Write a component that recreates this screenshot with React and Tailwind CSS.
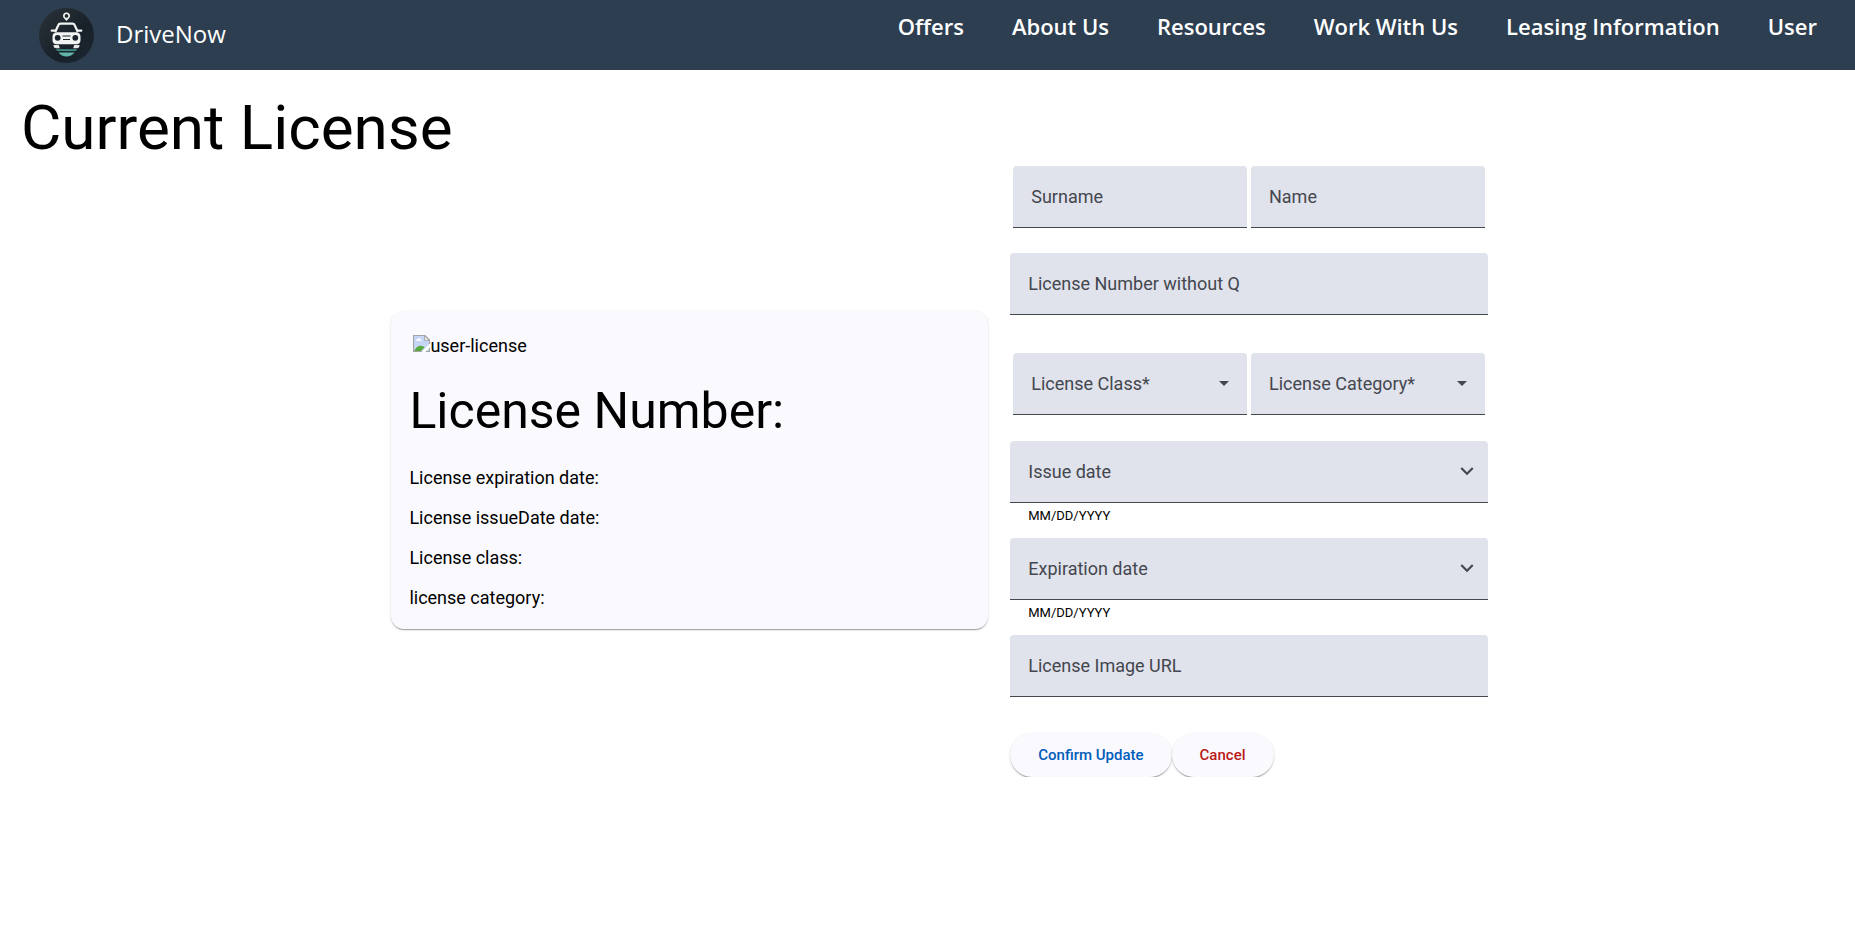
import React from "react";

const NAV_LINKS = ["Offers", "About Us", "Resources", "Work With Us", "Leasing Information", "User"];

const DETAILS = [
  "License expiration date:",
  "License issueDate date:",
  "License class:",
  "license category:",
];

function Logo() {
  return (
    <svg viewBox="0 0 55 55" className="size-[55px]" aria-hidden="true">
      <defs>
        <linearGradient id="disc" x1="0" y1="0" x2="1" y2="1">
          <stop offset="0" stopColor="#2b3238" />
          <stop offset="0.6" stopColor="#18212a" />
          <stop offset="1" stopColor="#1d2731" />
        </linearGradient>
      </defs>
      <circle cx="27.5" cy="27.5" r="27.5" fill="url(#disc)" />
      <path
        fillRule="evenodd"
        fill="#f1f3f2"
        d="M27.500 4.400a3.500 3.500 0 0 0-3.500 3.500c0 2.200 2.200 3 3.500 5.200 1.300-2.200 3.500-3 3.500-5.200a3.500 3.500 0 0 0-3.500-3.500zm0 1.700a1.800 1.800 0 1 1 0 3.700 1.800 1.800 0 0 1 0-3.700z"
      />
      <path d="M16.200 24l3-6.600q.7-1.700 2.400-1.700h11.800q1.700 0 2.400 1.700l3 6.600" fill="none" stroke="#f1f3f2" strokeWidth="2.300" />
      <path d="M12.800 22.600h3.400M38.800 22.600h3.400" stroke="#f1f3f2" strokeWidth="2.400" strokeLinecap="round" />
      <path
        fill="#f1f3f2"
        d="M18 24.200h19q4.500 0 4.500 4.500v3.300q0 4.200-4.200 4.200H17.700q-4.200 0-4.200-4.200v-3.300q0-4.500 4.500-4.500z"
      />
      <circle cx="18.700" cy="29.800" r="2.900" fill="#1b242d" />
      <circle cx="36.300" cy="29.800" r="2.900" fill="#1b242d" />
      <path d="M23.500 28h8M24 31.500h7" stroke="#1b242d" strokeWidth="1.100" />
      <path fill="#e6e9e8" d="M14.500 37h5.200l1.100 3.300h-3.600q-2.700 0-2.700-3.300zM40.500 37h-5.200l-1.100 3.300h3.600q2.700 0 2.700-3.300z" />
      <path fill="#3f8f86" d="M17 41.200h21l-1.200 1.900H18.200z" />
      <path fill="#5fb5a6" d="M19.500 44.500h16q-3 4-8 4t-8-4z" />
    </svg>
  );
}

function BrokenImageIcon() {
  return (
    <svg viewBox="0 0 16 16" className="size-[17px]" aria-hidden="true">
      <path d="M.5.5h10.500l4.500 4.500v10.500H.5z" fill="#c6d6f6" stroke="#a3a3a3" />
      <path d="M11 .5v4.500h4.500z" fill="#fff" stroke="#a3a3a3" />
      <path d="M2.500 5.500q0-1.500 1.700-1.500.6-1.300 2-1 1.300.2 1.300 1.500 1 .2.800 1z" fill="#fff" />
      <path d="M1 15q2.500-5 6.500-5 2 0 3.500 1.500L7.500 15z" fill="#57ab3c" />
      <path d="M8 16l8-8v3.500L11.500 16z" fill="#fff" />
    </svg>
  );
}

function Field({ id, label, children }) {
  return (
    <div className="relative flex h-[62px] min-w-0 flex-1 items-center rounded-t border-b border-[#44474e] bg-[#e0e2ec] text-[#44474e]">
      {children}
      <label htmlFor={id} className="pointer-events-none relative px-[18px]">
        {label}
      </label>
    </div>
  );
}

const CONTROL = "absolute inset-0 w-full appearance-none rounded-t bg-transparent px-[18px] outline-none";

function TextField({ id, label }) {
  return (
    <Field id={id} label={label}>
      <input id={id} type="text" className={CONTROL} />
    </Field>
  );
}

function SelectField({ id, label, options }) {
  return (
    <Field id={id} label={label}>
      <select id={id} required defaultValue="" className={CONTROL}>
        <option value=""></option>
        {options.map((option) => (
          <option key={option}>{option}</option>
        ))}
      </select>
      <svg viewBox="0 0 10 5" className="pointer-events-none absolute right-[18px] h-[5px] w-[10px]" aria-hidden="true">
        <path d="M0 0h10L5 5z" fill="#44474e" />
      </svg>
    </Field>
  );
}

function DateField({ id, label }) {
  return (
    <div className="h-[97px]">
      <Field id={id} label={label}>
        <input id={id} type="text" aria-describedby={id + "-hint"} className={CONTROL} />
        <button type="button" aria-label={"Open calendar for " + label} className="absolute right-2 flex size-[26px] items-center justify-center">
          <svg viewBox="0 0 24 24" className="size-[26px]" aria-hidden="true">
            <path d="M7.410 7.590L12 12.170l4.590-4.580L18 9l-6 6-6-6z" fill="#44474e" />
          </svg>
        </button>
      </Field>
      <p id={id + "-hint"} className="px-[18px] pt-1 text-[13px] leading-[18px] text-black">
        MM/DD/YYYY
      </p>
    </div>
  );
}

const BUTTON =
  "h-11 rounded-full bg-[#faf9fd] px-7 text-[15px] font-medium shadow-[0_2px_1px_-1px_rgba(0,0,0,0.2),0_1px_1px_0_rgba(0,0,0,0.14),0_1px_3px_0_rgba(0,0,0,0.12)]";

export default function App() {
  return (
    <div className="bg-white font-[Roboto,sans-serif] text-[18px] leading-[22px] text-black">
      <header className="flex h-[70px] justify-between bg-[#2d3e50] pr-[38px] pl-[39px] font-['Open_Sans',sans-serif] leading-[28px] text-white">
        <a href="#home" className="flex items-center gap-[22px]">
          <Logo />
          <span className="pb-0.5 text-[24px]">DriveNow</span>
        </a>
        <nav className="flex gap-12 pt-3 text-[22px] font-semibold">
          {NAV_LINKS.map((link) => (
            <a key={link} href="#nav" className="h-7 whitespace-nowrap">
              {link}
            </a>
          ))}
        </nav>
      </header>

      <main>
        <h1 className="px-[21px] pt-[23px] text-[62px] leading-[70px]">Current License</h1>
        <div className="grid grid-cols-[5fr_4fr] items-center gap-[22px] pr-[19.8%] pl-[21.1%]">
          <section className="rounded-[13px] bg-[#faf9fd] px-[18px] pt-6 pb-5 shadow-[0_2px_1px_-1px_rgba(0,0,0,0.2),0_1px_1px_0_rgba(0,0,0,0.14),0_1px_3px_0_rgba(0,0,0,0.12)]">
            <div className="flex items-start pl-1">
              <BrokenImageIcon />
              <span>user-license</span>
            </div>
            <h2 className="pt-[26px] pb-7 text-[50px] leading-[56px]">License Number:</h2>
            <div className="flex flex-col gap-[18px]">
              {DETAILS.map((detail) => (
                <p key={detail}>{detail}</p>
              ))}
            </div>
          </section>

          <form className="pt-[3px]" onSubmit={(event) => event.preventDefault()}>
            <div className="flex gap-1 px-[3px] pb-[25px]">
              <TextField id="surname" label="Surname" />
              <TextField id="name" label="Name" />
            </div>
            <div className="pb-[38px]">
              <TextField id="number" label="License Number without Q" />
            </div>
            <div className="flex gap-1 px-[3px] pb-[26px]">
              <SelectField id="class" label="License Class*" options={["A", "B", "C"]} />
              <SelectField id="category" label="License Category*" options={["Car", "Truck"]} />
            </div>
            <DateField id="issue" label="Issue date" />
            <DateField id="expiration" label="Expiration date" />
            <div className="pb-9">
              <TextField id="image" label="License Image URL" />
            </div>
            <div className="flex">
              <button type="submit" className={BUTTON + " text-[#005cbb]"}>
                Confirm Update
              </button>
              <button type="button" className={BUTTON + " text-[#ba1a1a]"}>
                Cancel
              </button>
            </div>
          </form>
        </div>
      </main>
    </div>
  );
}
